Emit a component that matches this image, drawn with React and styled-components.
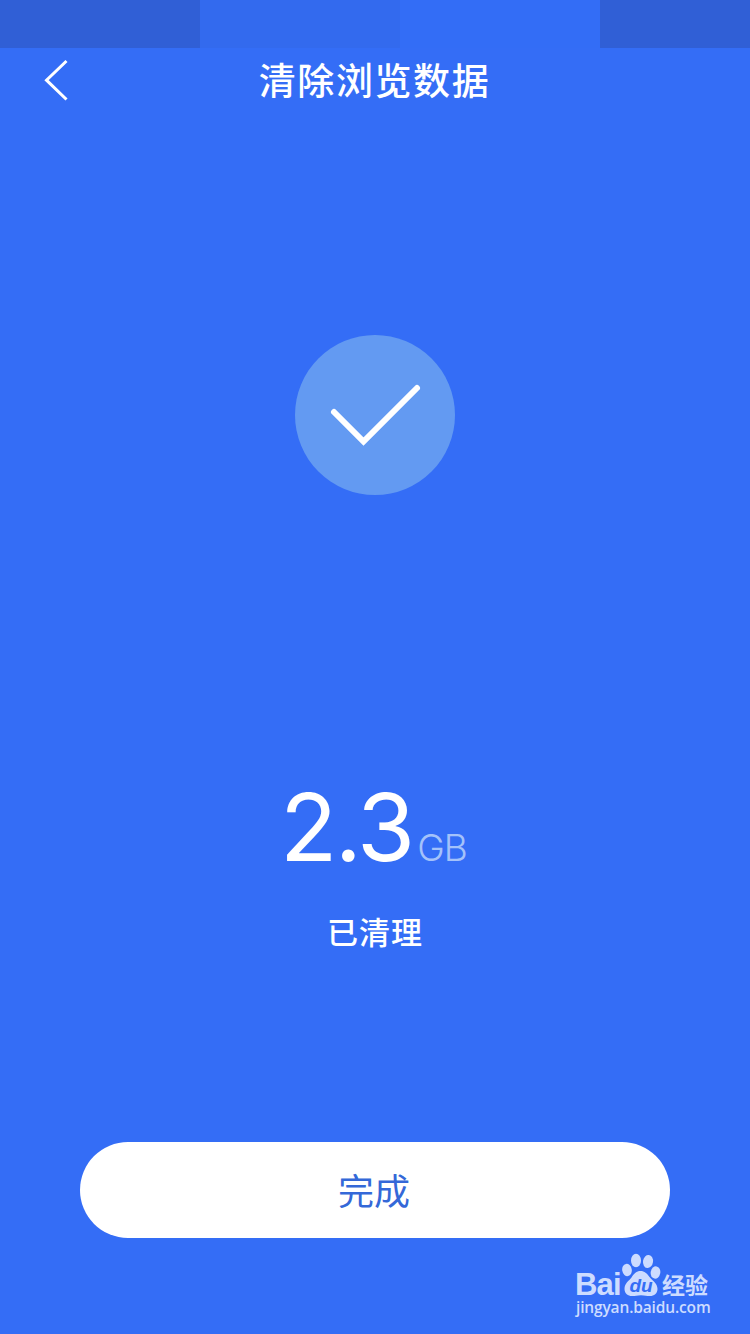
import React from "react"
import styled, { createGlobalStyle } from 'styled-components'

const GlobalStyle = createGlobalStyle`
  * {
    box-sizing: border-box;
  }

  body {
    margin: 0;
    background: #346df6;
    font-family: Inter, "Noto Sans CJK SC", sans-serif;
  }
`

const Screen = styled.div`
  position: relative;
  display: flex;
  flex-direction: column;
  align-items: center;
  width: 750px;
  height: 1334px;
  background: #346df6;
  color: white;
  overflow: hidden;
`

const StatusBar = styled.div`
  display: grid;
  grid-template-columns: 200px 200px 200px 150px;
  width: 100%;
  height: 48px;
  flex: none;
`

const StatusBlock = styled.div`
  background: ${props => props.$color};
`

const NavBar = styled.header`
  display: grid;
  grid-template-columns: 120px 1fr 120px;
  align-items: center;
  width: 100%;
  height: 64px;
  flex: none;
`

const BackButton = styled.button`
  display: flex;
  padding: 0 0 0 42px;
  border: 0;
  background: none;
  cursor: pointer;
`

const Title = styled.h1`
  margin: 0;
  padding: 0 1px 2px 0;
  text-align: center;
  font-family: "Noto Sans CJK SC", sans-serif;
  font-size: 37px;
  font-weight: 500;
  line-height: 62px;
  letter-spacing: 1.6px;
`

const StatusCircle = styled.div`
  width: 160px;
  height: 160px;
  margin-top: 223px;
  border-radius: 50%;
  background: #639af2;
  flex: none;
`

const Amount = styled.div`
  display: flex;
  align-items: baseline;
  margin-top: 272px;
  padding-right: 3px;
  height: 118px;
  line-height: 120px;
`

const Value = styled.span`
  font-size: 94px;
  letter-spacing: -2.4px;
`

const Unit = styled.span`
  margin-left: 4.5px;
  font-size: 37px;
  font-weight: 350;
  letter-spacing: -0.8px;
  color: #a4c2fa;
`

const Caption = styled.p`
  margin: 26px 0 0;
  font-family: "Noto Sans CJK SC", sans-serif;
  font-size: 31px;
  font-weight: 500;
  line-height: 40px;
  letter-spacing: 1px;
`

const DoneButton = styled.button`
  width: 590px;
  height: 96px;
  margin-top: 191px;
  padding: 0 2px 2px 0;
  border: 0;
  border-radius: 48px;
  background: white;
  color: #3468d8;
  font-family: "Noto Sans CJK SC", sans-serif;
  font-size: 36px;
  line-height: 94px;
  cursor: pointer;
  flex: none;
`

const Watermark = styled.div`
  position: absolute;
  left: 575px;
  top: 1252px;
  width: 140px;
  color: #cddcff;
`

const Brand = styled.div`
  display: flex;
  align-items: flex-end;
  height: 46px;
`

const BrandName = styled.span`
  width: 46px;
  font-family: "Liberation Sans", sans-serif;
  font-size: 31px;
  font-weight: 700;
  line-height: 26px;
  letter-spacing: -0.8px;
`

const BrandSuffix = styled.span`
  margin-left: 1px;
  font-family: "Noto Sans CJK SC", sans-serif;
  font-size: 23px;
  font-weight: 700;
  line-height: 28px;
`

const Site = styled.div`
  padding-left: 1px;
  font-family: "Open Sans", sans-serif;
  font-size: 15.5px;
  font-weight: 600;
  line-height: 19px;
  letter-spacing: -0.15px;
`

const PawLabel = styled.text`
  font-family: "Liberation Sans", sans-serif;
  font-size: 19px;
  font-weight: 700;
  font-style: italic;
  fill: #346df6;
`

const statusColors = ['#305fd6', '#336aee', '#336df6', '#305fd6']

const Paw = () => (
  <svg width="40" height="46" viewBox="0 0 40 46">
    <g fill="currentColor">
      <ellipse cx="6" cy="18" rx="4.8" ry="6.2" transform="rotate(-10 6 18)" />
      <ellipse cx="15" cy="8.5" rx="5" ry="6.8" />
      <ellipse cx="27" cy="9.5" rx="5" ry="6.6" transform="rotate(8 27 9.5)" />
      <ellipse cx="34.5" cy="20.5" rx="4.8" ry="6.2" transform="rotate(10 34.5 20.5)" />
      <path d="M19.500 19c-4 0-6.500 2.500-9 6.500C8 29 3.500 31 3.500 37c0 4.500 3.500 7 7.500 7 3.500 0 5-.8 9-.8s5.500 .8 9 .8c4 0 7.500-2.500 7.500-7 0-6-5.500-8.500-8-12C26 21.500 23.500 19 19.500 19z" />
    </g>
    <PawLabel x="8.5" y="40">du</PawLabel>
  </svg>
)

class App extends React.Component {
  render() {
    return (
      <Screen>
        <GlobalStyle />
        <StatusBar>
          {statusColors.map((color, i) => <StatusBlock key={i} $color={color} />)}
        </StatusBar>
        <NavBar>
          <BackButton aria-label="返回">
            <svg width="28" height="42" viewBox="0 0 28 42" fill="none" stroke="white" strokeWidth="3">
              <path d="M24.5 2L4.500 21.200L24.500 40.500" />
            </svg>
          </BackButton>
          <Title>清除浏览数据</Title>
        </NavBar>
        <StatusCircle>
          <svg width="160" height="160" fill="none" stroke="white" strokeWidth="6" strokeLinecap="round">
            <path d="M39 77L68.500 106.500L122 53" />
          </svg>
        </StatusCircle>
        <Amount>
          <Value>2.3</Value>
          <Unit>GB</Unit>
        </Amount>
        <Caption>已清理</Caption>
        <DoneButton>完成</DoneButton>
        <Watermark>
          <Brand>
            <BrandName>Bai</BrandName>
            <Paw />
            <BrandSuffix>经验</BrandSuffix>
          </Brand>
          <Site>jingyan.baidu.com</Site>
        </Watermark>
      </Screen>
    )
  }
}

export default App
